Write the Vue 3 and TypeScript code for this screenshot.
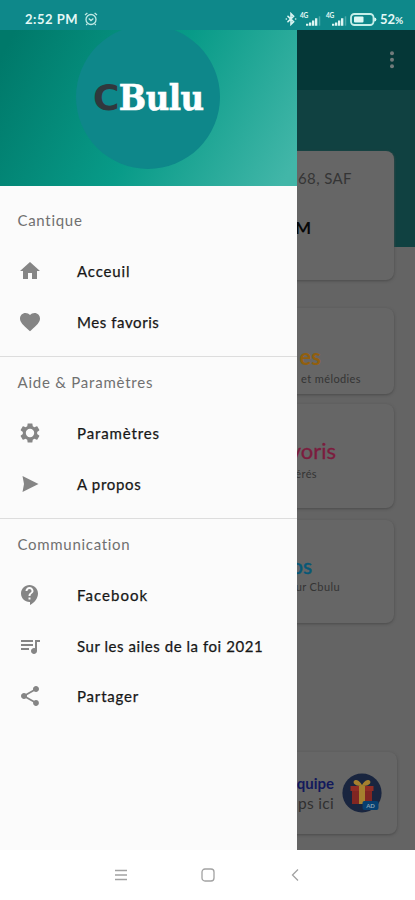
<script setup lang="ts">
interface Entry {
  label: string
  icon: string
  spacing: number
}
interface Section {
  title: string
  spacing: number
  entries: Entry[]
}

const sections: Section[] = [
  {
    title: 'Cantique',
    spacing: 0.7,
    entries: [
      { label: 'Acceuil', spacing: 0.85, icon: 'M10 20v-6h4v6h5v-8h3L12 3 2 12h3v8z' },
      {
        label: 'Mes favoris',
        spacing: 0.58,
        icon: 'M12 21.35l-1.45-1.32C5.4 15.36 2 12.28 2 8.5 2 5.42 4.42 3 7.5 3c1.74 0 3.41.81 4.5 2.09C13.09 3.81 14.76 3 16.5 3 19.58 3 22 5.42 22 8.5c0 3.78-3.4 6.86-8.55 11.54z',
      },
    ],
  },
  {
    title: 'Aide & Paramètres',
    spacing: 0.77,
    entries: [
      {
        label: 'Paramètres',
        spacing: 0.88,
        icon: 'M19.14 12.94c.04-.3.06-.61.06-.94s-.02-.64-.07-.94l2.03-1.58c.18-.14.23-.41.12-.61l-1.92-3.32c-.12-.22-.37-.29-.59-.22l-2.39.96c-.5-.38-1.03-.7-1.62-.94l-.36-2.54c-.04-.24-.24-.41-.48-.41h-3.84c-.24 0-.43.17-.47.41l-.36 2.54c-.59.24-1.13.57-1.62.94l-2.39-.96c-.22-.08-.47 0-.59.22L2.74 8.87c-.12.21-.08.47.12.61l2.03 1.58c-.05.3-.09.63-.09.94s.02.64.07.94l-2.03 1.58c-.18.14-.23.41-.12.61l1.92 3.32c.12.22.37.29.59.22l2.39-.96c.5.38 1.03.7 1.62.94l.36 2.54c.05.24.24.41.48.41h3.84c.24 0 .44-.17.47-.41l.36-2.54c.59-.24 1.13-.56 1.62-.94l2.39.96c.22.08.47 0 .59-.22l1.92-3.32c.12-.22.07-.47-.12-.61zM12 16.2A4.2 4.2 0 1 1 12 7.8a4.2 4.2 0 0 1 0 8.4z',
      },
      { label: 'A propos', spacing: 0.68, icon: 'M4.500 4l16 8-16 8 1.500-8z' },
    ],
  },
  {
    title: 'Communication',
    spacing: 0.7,
    entries: [
      {
        label: 'Facebook',
        spacing: 1.05,
        icon: 'M11.5 2C6.81 2 3 5.81 3 10.5S6.81 19 11.5 19h.5v3c4.86-2.34 8-7 8-11.5C20 5.81 16.19 2 11.5 2zm1 14.5h-2v-2h2v2zm0-3.5h-2c0-3.25 3-3 3-5 0-1.1-.9-2-2-2s-2 .9-2 2h-2c0-2.21 1.79-4 4-4s4 1.79 4 4c0 2.5-3 2.75-3 5z',
      },
      {
        label: 'Sur les ailes de la foi 2021',
        spacing: 0.55,
        icon: 'M15 6H3v2h12V6zm0 4H3v2h12v-2zM3 16h8v-2H3v2zM17 6v8.18c-.31-.11-.65-.18-1-.18-1.66 0-3 1.34-3 3s1.34 3 3 3 3-1.34 3-3V8h3V6h-5z',
      },
      {
        label: 'Partager',
        spacing: 0.82,
        icon: 'M18 16.08c-.76 0-1.44.3-1.96.77L8.91 12.7c.05-.23.09-.46.09-.7s-.04-.47-.09-.7l7.05-4.11c.54.5 1.25.81 2.04.81 1.66 0 3-1.34 3-3s-1.34-3-3-3-3 1.34-3 3c0 .24.04.47.09.7L8.04 9.81C7.5 9.31 6.79 9 6 9c-1.66 0-3 1.34-3 3s1.34 3 3 3c.79 0 1.5-.31 2.04-.81l7.12 4.16c-.05.21-.08.43-.08.65 0 1.61 1.31 2.92 2.92 2.92s2.92-1.31 2.92-2.92-1.31-2.92-2.92-2.92z',
      },
    ],
  },
]
</script>

<template>
  <div class="phone">
    <header class="status">
      <span class="clock">2:52 PM</span>
      <svg class="alarm" viewBox="0 0 14 14">
        <circle cx="7" cy="7.5" r="5" />
        <path d="M1 3l2.4-2M13 3l-2.4-2M4.7 6.6L7 8.6l2.4-2M3.2 11.8L2.2 13M10.8 11.8l1 1.2" />
      </svg>
      <svg class="bluetooth" viewBox="0 0 12 14">
        <path d="M3 4.300l5.600 5.400-2.600 2.600V1.700l2.600 2.600L3 9.700M1.300 7h.1M10.600 7h.1" />
      </svg>
      <span v-for="n in 2" :key="n" class="signal">
        <small>4G</small>
        <svg viewBox="0 0 16 10">
          <path d="M0 8h2.500v2H0zM3.2 6.500h2.500V10h-2.500zM6.400 4.500h2.500V10h-2.500zM9.600 2h2.500v8h-2.500z" />
          <path class="faint" d="M13.6 0h1.6v10h-1.6z" />
        </svg>
      </span>
      <svg class="battery" viewBox="0 0 27 13">
        <rect class="shell" x="1" y="1" width="22.5" height="11" rx="3.4" />
        <rect class="charge" x="4" y="3.6" width="9.5" height="5.8" rx="1" />
        <path class="charge" d="M24.2 4.4q2.2 0 2.2 2.1t-2.2 2.1z" />
      </svg>
      <span class="percent">52<small>%</small></span>
    </header>

    <div class="stage">
      <main class="page">
        <div class="toolbar">
          <svg viewBox="0 0 6 20">
            <circle cx="3" cy="3.2" r="2" /><circle cx="3" cy="9.7" r="2" /><circle cx="3" cy="16.2" r="2" />
          </svg>
        </div>
        <section class="card summary">
          <p class="date">68, SAF</p>
          <p class="time">M</p>
        </section>
        <section class="card songs">
          <h2>es</h2>
          <p>et mélodies</p>
        </section>
        <section class="card favorites">
          <h2>voris</h2>
          <p>intérés</p>
        </section>
        <section class="card about">
          <h2>os</h2>
          <p>sur Cbulu</p>
        </section>
        <section class="card team">
          <div>
            <h3>quipe</h3>
            <p>ps ici</p>
          </div>
          <svg viewBox="0 0 40 40">
            <circle cx="20" cy="20" r="19.6" fill="#19253f" />
            <path d="M10 16h20v15H10z" fill="#812622" />
            <path d="M8.5 13h23v5h-23z" fill="#8f2c25" />
            <path d="M17 13h6v18h-6zM19 13c-8 0-9-5-5.500-6 3-.5 5 2.500 6.500 5 1.500-2.500 3.500-5.500 6.500-5 3.500 1 2.500 6-5.500 6z" fill="#a5802e" />
            <rect x="20.500" y="28" width="16" height="9" rx="2" fill="#063f70" />
            <text x="28.500" y="35" text-anchor="middle">AD</text>
          </svg>
        </section>
      </main>

      <aside class="drawer">
        <div class="banner">
          <div class="disc"><span class="logo"><b>C</b>Bulu</span></div>
        </div>
        <nav>
          <section v-for="s in sections" :key="s.title" class="group">
            <h4 :style="{ letterSpacing: s.spacing + 'px' }">{{ s.title }}</h4>
            <a v-for="e in s.entries" :key="e.label" class="entry">
              <svg viewBox="0 0 24 24"><path fill-rule="evenodd" :d="e.icon" /></svg>
              <span :style="{ letterSpacing: e.spacing + 'px' }">{{ e.label }}</span>
            </a>
          </section>
        </nav>
      </aside>
    </div>

    <footer class="system">
      <svg viewBox="0 0 14 14"><path d="M1 2.500h12M1 7h12M1 11.500h12" /></svg>
      <svg viewBox="0 0 14 14"><rect x="1" y="1" width="12" height="12" rx="3" /></svg>
      <svg viewBox="0 0 14 14"><path d="M10 1.500L4.500 7l5.500 5.500" /></svg>
    </footer>
  </div>
</template>

<style>
body {
  overflow: hidden;
  background: #fff;
}
</style>

<style scoped>
.phone {
  display: flex;
  flex-direction: column;
  width: 415px;
  height: 900px;
  font-family: Lato, "Open Sans", sans-serif;
}
h2, h3, h4, p {
  margin: 0;
  font-weight: 400;
}
.status {
  display: flex;
  align-items: center;
  box-sizing: border-box;
  height: 30px;
  padding: 8px 11px 0 25px;
  background: #0e888a;
  color: #e4f8f6;
  font-weight: 700;
}
.clock {
  width: 53px;
  font-size: 13px;
  letter-spacing: 0.500px;
  white-space: nowrap;
}
.status svg {
  flex: none;
}
.alarm {
  width: 14px;
  height: 14px;
  margin-left: 6px;
  fill: none;
  stroke: #bfe9e5;
  stroke-width: 1.3;
}
.bluetooth {
  width: 12px;
  height: 14px;
  margin-left: auto;
  fill: none;
  stroke: #d8f3f1;
  stroke-width: 1.6;
  stroke-linecap: round;
}
.signal {
  display: flex;
  width: 23px;
  height: 13px;
  margin-left: 3px;
}
.signal small {
  width: 6px;
  font-size: 6.500px;
  line-height: 6px;
  letter-spacing: -0.200px;
}
.signal svg {
  align-self: flex-end;
  width: 15px;
  height: 10px;
  fill: #dff6f3;
}
.signal .faint {
  fill: #4ba8a8;
}
.battery {
  width: 27px;
  height: 13px;
  margin-left: 1px;
}
.shell {
  fill: none;
  stroke: #c6efe9;
  stroke-width: 1.8;
}
.charge {
  fill: #dcf8f4;
}
.percent {
  width: 24px;
  margin-left: 3px;
  font-size: 13px;
  white-space: nowrap;
}
.percent small {
  font-size: 10px;
}
.stage {
  position: relative;
  height: 820px;
}
.page {
  display: flex;
  flex-direction: column;
  height: 820px;
  background: linear-gradient(#104141 217px, #646464 217px);
  text-align: right;
}
.toolbar {
  display: flex;
  justify-content: flex-end;
  box-sizing: border-box;
  height: 60px;
  padding: 20px 20px 0 0;
  background: #053737;
}
.toolbar svg {
  width: 6px;
  height: 20px;
  fill: #727b7b;
}
.card {
  box-sizing: border-box;
  width: 379px;
  margin-left: 15px;
  border-radius: 8px;
  background: #666;
  box-shadow: 0 1px 3px #4b4b4b;
}
.summary {
  height: 129px;
  margin-top: 61px;
}
.date {
  padding: 17px 42px 0 0;
  color: #353535;
  font-size: 15px;
  line-height: 20px;
  letter-spacing: 0.400px;
}
.time {
  padding: 28px 83px 0 0;
  color: #080808;
  font-size: 17px;
  font-weight: 700;
  line-height: 24px;
}
.songs {
  height: 86px;
  margin-top: 28px;
}
.card h2 {
  font-size: 21px;
  line-height: 28px;
}
.card p {
  white-space: nowrap;
}
.card.songs h2 {
  padding: 35px 73px 0 0;
  color: #925f0e;
  font-size: 22px;
  font-weight: 700;
}
.songs p, .favorites p, .about p {
  color: #343434;
  font-size: 11px;
  line-height: 14px;
  letter-spacing: 0.400px;
}
.songs p {
  padding: 1px 33px 0 0;
}
.favorites {
  height: 104px;
  margin-top: 10px;
}
.card.favorites h2 {
  padding: 33px 58px 0 0;
  color: #7c1c3e;
  font-size: 22px;
  -webkit-text-stroke: 0.300px #7c1c3e;
}
.favorites p {
  padding: 2px 77px 0 0;
}
.about {
  height: 103px;
  margin-top: 12px;
}
.about h2 {
  padding: 32px 82px 0 0;
  color: #075877;
  -webkit-text-stroke: 0.500px #075877;
}
.about p {
  padding: 0 54px 0 0;
}
.team {
  display: flex;
  justify-content: flex-end;
  align-items: center;
  width: 382px;
  height: 82px;
  margin-top: 129px;
  padding-right: 15px;
}
.team h3 {
  color: #12195c;
  font-size: 15px;
  font-weight: 700;
  line-height: 20px;
}
.team p {
  color: #303030;
  font-size: 15.500px;
  line-height: 20px;
  letter-spacing: 0.300px;
}
.team svg {
  width: 40px;
  height: 40px;
  margin-left: 8px;
}
.team text {
  fill: #86a2b2;
  font-size: 6px;
  font-weight: 700;
}
.drawer {
  position: absolute;
  inset: 0 auto 0 0;
  width: 296.500px;
  background: #fbfbfb;
}
.banner {
  display: flex;
  justify-content: center;
  align-items: flex-start;
  height: 156px;
  overflow: hidden;
  background: linear-gradient(118deg, #00796a 4%, #089b88 51%, #42b6a8 96%);
}
.disc {
  display: flex;
  flex: none;
  justify-content: center;
  align-items: center;
  width: 144px;
  height: 144px;
  margin-top: -5px;
  border-radius: 50%;
  background: #0e878a;
}
.logo {
  color: #fff;
  font-family: "DejaVu Serif Condensed", "DejaVu Serif", serif;
  font-size: 36px;
  font-stretch: condensed;
  font-weight: 700;
  line-height: 40px;
  letter-spacing: -0.500px;
  -webkit-text-stroke: 0.600px #fff;
}
.logo b {
  color: #30383d;
  font-family: "DejaVu Sans", sans-serif;
  font-stretch: normal;
  -webkit-text-stroke: 0;
}
nav {
  padding-top: 9px;
}
.group + .group {
  border-top: 1px solid #ddd;
}
.group {
  padding-bottom: 9px;
}
.group h4 {
  padding-left: 17.500px;
  color: #707070;
  font-size: 15px;
  line-height: 51px;
}
.entry {
  display: flex;
  align-items: center;
  height: 50.500px;
  padding-left: 18px;
  color: #171717;
  font-size: 15px;
  white-space: nowrap;
}
.entry span {
  -webkit-text-stroke: 0.250px #171717;
}
.entry svg {
  width: 24px;
  height: 24px;
  margin-right: 35px;
  fill: #858585;
}
.system {
  display: flex;
  justify-content: center;
  align-items: center;
  gap: 73px;
  height: 50px;
  background: #fff;
}
.system svg {
  width: 14px;
  height: 14px;
  fill: none;
  stroke: #a2a2a2;
  stroke-width: 1.300;
}
</style>
